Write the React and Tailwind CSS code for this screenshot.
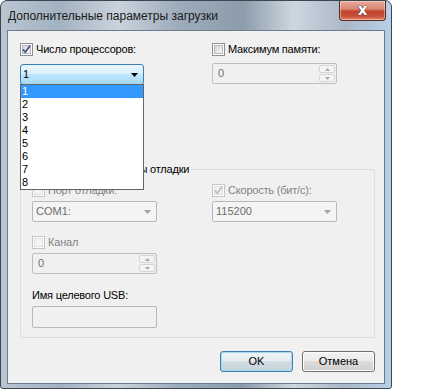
import React from "react";

const font = { fontFamily: '"Liberation Sans", "Noto Sans", sans-serif' };

function CheckBox({ checked, disabled }) {
  return (
    <div
      className={
        "relative w-[13px] h-[13px] shrink-0 border bg-white " +
        (disabled ? "border-[#c5c5c5]" : "border-[#8e8f8f]")
      }
    >
      <div
        className={
          "absolute left-[1px] top-[1px] w-[9px] h-[9px] border " +
          (disabled
            ? "border-[#dedede] bg-[#f4f4f4]"
            : "border-[#b4b9bf] bg-[linear-gradient(135deg,#d0d4d9,#f8f8f8)]")
        }
      />
      {checked && (
        <svg className="absolute left-0 top-0" width="11" height="11" viewBox="0 0 11 11">
          <path
            d="M2 5.5 L4.3 8.2 L9 1.8"
            fill="none"
            stroke={disabled ? "#b9b9b9" : "#3c4f7e"}
            strokeWidth="1.7"
          />
        </svg>
      )}
    </div>
  );
}

function Check({ checked, disabled, label }) {
  return (
    <div className="flex items-center h-[13px] gap-[3px]">
      <CheckBox checked={checked} disabled={disabled} />
      <span className={"text-[11px] leading-[15px] tracking-[-0.2px] whitespace-nowrap " + (disabled ? "text-[#838383]" : "text-black")}>
        {label}
      </span>
    </div>
  );
}

function DisabledCombo({ value, w }) {
  return (
    <div
      className={
        "h-[21px] rounded-[2px] border border-[#b5b9bd] bg-[#f4f4f4] flex items-center justify-between pl-[3px] pr-[5px] " + w
      }
    >
      <span className="text-[11px] leading-[15px] text-[#6d6d6d]">{value}</span>
      <svg width="7" height="4" viewBox="0 0 7 4">
        <path d="M0 0 H7 L3.5 4 Z" fill="#a2a2a2" />
      </svg>
    </div>
  );
}

function Spin({ value }) {
  return (
    <div className="w-[125px] h-[21px] rounded-[2px] border border-[#bcbfc3] bg-[#f0f0f0] flex items-stretch">
      <span className="flex-1 text-[11px] leading-[19px] text-[#6d6d6d] pl-[5px]">{value}</span>
      <div className="w-[17px] flex flex-col gap-px py-px pr-px">
        <div className="flex-1 rounded-[2px] border border-[#d5d5d5] bg-[#f4f4f4] flex items-center justify-center">
          <svg width="5" height="3" viewBox="0 0 5 3">
            <path d="M0 3 L2.5 0 L5 3 Z" fill="#a8a8a8" />
          </svg>
        </div>
        <div className="flex-1 rounded-[2px] border border-[#d5d5d5] bg-[#f4f4f4] flex items-center justify-center">
          <svg width="5" height="3" viewBox="0 0 5 3">
            <path d="M0 0 L5 0 L2.5 3 Z" fill="#a8a8a8" />
          </svg>
        </div>
      </div>
    </div>
  );
}

function Button({ children, primary }) {
  return (
    <div
      className={
        "w-[73px] h-[21px] rounded-[3px] border flex items-center justify-center text-[11px] leading-[15px] text-black " +
        (primary
          ? "border-[#3c7fb1] bg-[linear-gradient(#eef3f6_0%,#e6ecef_45%,#d3dde3_50%,#c6d2d9_100%)] shadow-[inset_0_0_0_1px_#a6d8f4]"
          : "border-[#707070] bg-[linear-gradient(#f2f2f2_0%,#ebebeb_45%,#dddddd_50%,#cfcfcf_100%)] shadow-[inset_0_0_0_1px_#fcfcfc]")
      }
    >
      {children}
    </div>
  );
}

export default function App() {
  return (
    <div className="w-[446px] h-[391px] bg-white relative overflow-hidden" style={font}>
      <div className="w-[392px] h-[389px] rounded-t-[7px] rounded-b-[3px] border border-[#3b4653] bg-[linear-gradient(90deg,#b9c6d2_0%,#a3b2c1_15%,#c9d3dc_30%,#9eadbc_45%,#8d9cab_62%,#cdd7e0_75%,#aab8c6_88%,#b7d0e8_100%)] flex flex-col relative">
        {/* title bar */}
        <div className="h-[29px] flex items-start justify-between shrink-0">
          <span className="ml-[7px] mt-[7px] text-[12px] leading-[16px] text-[#1a1a1a] whitespace-nowrap">
            Дополнительные параметры загрузки
          </span>
          <div className="mr-[5px] w-[47px] h-[20px] rounded-b-[4px] border border-t-0 border-[#5a2a22] bg-[linear-gradient(#e9a99b_0%,#d98a78_40%,#c2432c_55%,#c84f36_80%,#e08a70_100%)] flex items-center justify-center shadow-[inset_0_0_0_1px_rgba(255,220,210,0.5)]">
            <span
              className="text-[15px] leading-[15px] font-bold text-white"
              style={{ fontFamily: '"DejaVu Sans", sans-serif', textShadow: "0 0 1px #3a1a14, 0 0 1px #3a1a14" }}
            >
              x
            </span>
          </div>
        </div>
        {/* client */}
        <div className="ml-[6px] w-[378px] h-[354px] border border-[#6d7d8d] bg-[#f0f0f0] relative pt-[12px] pl-[12px]">
          <div className="flex">
            <div className="w-[192px]">
              <Check checked label="Число процессоров:" />
              <div className="mt-[8px] w-[124px] h-[21px] rounded-[3px] border border-[#3c7fb1] bg-[linear-gradient(#eaf6fd_0%,#d9f0fc_45%,#bee6fd_50%,#a7d9f5_100%)] flex items-center justify-between pl-[2px] pr-[5px]">
                <span className="text-[11px] leading-[15px] text-black">1</span>
                <svg width="7" height="4" viewBox="0 0 7 4">
                  <path d="M0 0 H7 L3.5 4 Z" fill="#000" />
                </svg>
              </div>
            </div>
            <div>
              <Check label="Максимум памяти:" />
              <div className="mt-[7px]">
                <Spin value="0" />
              </div>
            </div>
          </div>

          {/* group box */}
          <div className="mt-[84px] w-[355px] h-[169px] rounded-[3px] border border-[#d5dfe5] relative pt-[14px] pl-[11px]">
            <span className="absolute left-[6px] top-[-9px] px-[2px] bg-[#f0f0f0] text-[11px] leading-[16px] tracking-[-0.2px] text-black whitespace-nowrap">
              Глобальные параметры отладки
            </span>
            <div className="flex">
              <div className="w-[180px]">
                <Check disabled label="Порт отладки:" />
                <div className="mt-[4px]">
                  <DisabledCombo value="COM1:" w="w-[125px]" />
                </div>
                <div className="mt-[14px]">
                  <Check disabled label="Канал" />
                </div>
                <div className="mt-[4px]">
                  <Spin value="0" />
                </div>
                <div className="mt-[14px] text-[11px] leading-[15px] tracking-[-0.2px] text-black whitespace-nowrap">Имя целевого USB:</div>
                <div className="mt-[3px] w-[125px] h-[22px] rounded-[2px] border border-[#b5b9bd] bg-[#f0f0f0]" />
              </div>
              <div>
                <Check checked disabled label="Скорость (бит/с):" />
                <div className="mt-[4px]">
                  <DisabledCombo value="115200" w="w-[125px]" />
                </div>
              </div>
            </div>
          </div>

          {/* buttons */}
          <div className="mt-[13px] w-[355px] flex justify-end gap-[9px]">
            <Button primary>OK</Button>
            <Button>Отмена</Button>
          </div>

          {/* dropdown list */}
          <div className="absolute left-[12px] top-[53px] w-[124px] h-[106px] border border-[#646464] bg-white py-0">
            {["1", "2", "3", "4", "5", "6", "7", "8"].map((n, i) => (
              <div
                key={n}
                className={
                  "h-[13px] text-[11px] leading-[13px] pl-[1px] " +
                  (i === 0 ? "bg-[#3399ff] text-white" : "text-black")
                }
              >
                {n}
              </div>
            ))}
          </div>
        </div>
      </div>
    </div>
  );
}
